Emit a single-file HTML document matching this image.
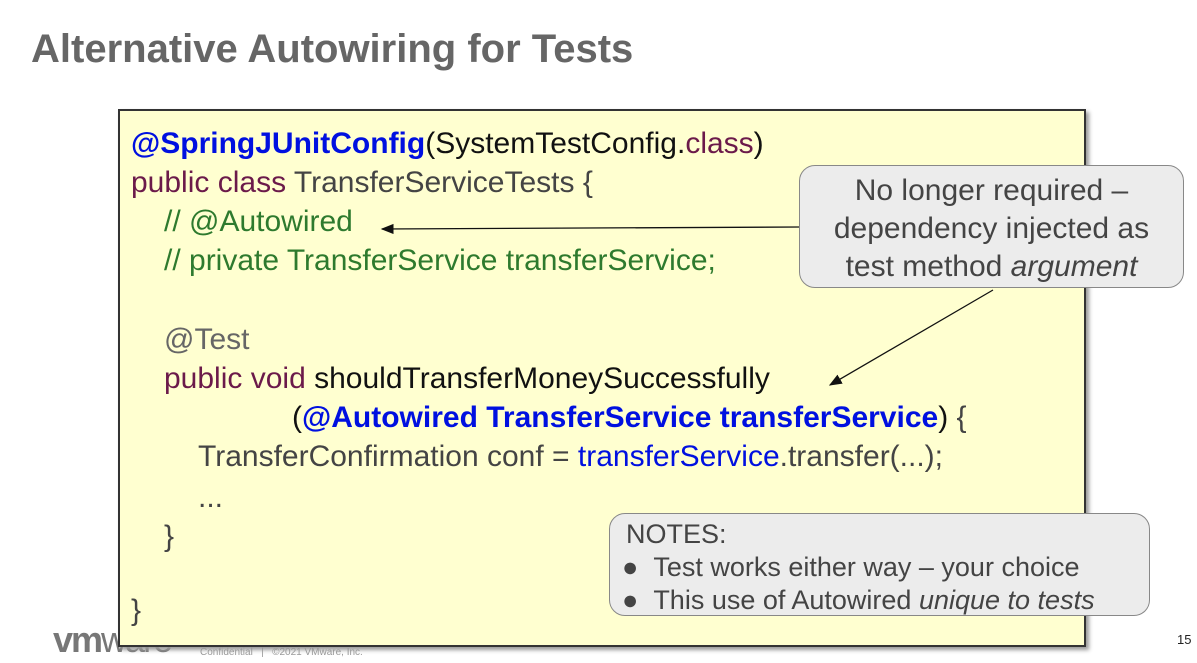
<!DOCTYPE html>
<html><head><meta charset="utf-8"><style>
body{margin:0;width:1197px;height:663px;background:#fff;position:relative;overflow:hidden;font-family:"Liberation Sans",sans-serif}
.t{position:absolute;left:31px;top:27px;font-size:40px;font-weight:bold;color:#666}
.box{position:absolute;left:118px;top:109px;width:964px;height:534px;background:#ffffd0;border:2px solid #333;box-shadow:3px 3px 4px #999}
.l{position:absolute;font-size:30px;line-height:40px;white-space:nowrap;color:#444}
.p{color:#6b1a4a}.g{color:#2e7a2e}.b{color:#0010e0;font-weight:bold}.bl{color:#0010e0}.k{color:#111}
.c{position:absolute;background:#ececec;border:1.5px solid #888;border-radius:16px;color:#444}
</style></head><body>
<div class="t">Alternative Autowiring for Tests</div>
<div style="position:absolute;left:53px;top:622px;font-size:36px;font-weight:bold;color:#777;letter-spacing:-2px;line-height:36px">vm<span style="font-weight:normal">ware</span></div>
<div class="box"></div>
<div class="l" style="left:131px;top:124px"><span class="b">@SpringJUnitConfig</span><span class="k">(SystemTestConfig.</span><span class="p">class</span><span class="k">)</span></div>
<div class="l" style="left:131px;top:163px"><span class="p">public class</span> TransferServiceTests {</div>
<div class="l g" style="left:164px;top:202px">// @Autowired</div>
<div class="l g" style="left:164px;top:241px">// private TransferService transferService;</div>
<div class="l" style="left:164px;top:320px;color:#666">@Test</div>
<div class="l" style="left:164px;top:359px"><span class="p">public void</span> <span class="k">shouldTransferMoneySuccessfully</span></div>
<div class="l" style="left:292px;top:398px"><span class="k">(</span><span class="b">@Autowired TransferService transferService</span><span class="k">)</span> {</div>
<div class="l" style="left:198px;top:437px">TransferConfirmation conf = <span class="bl">transferService</span>.transfer(...);</div>
<div class="l" style="left:198px;top:478px">...</div>
<div class="l" style="left:164px;top:517px">}</div>
<div class="l" style="left:131px;top:591px">}</div>
<svg style="position:absolute;left:0;top:0" width="1197" height="663">
<defs><marker id="a" markerWidth="10" markerHeight="8" refX="9" refY="4" orient="auto"><path d="M0,0 L10,4 L0,8z" fill="#111"/></marker></defs>
<line x1="800" y1="227" x2="382" y2="229" stroke="#111" stroke-width="1.3" marker-end="url(#a)"/>
<line x1="993" y1="290" x2="830" y2="385" stroke="#111" stroke-width="1.3" marker-end="url(#a)"/>
</svg>
<div class="c" style="left:799px;top:165px;width:385px;height:123px;text-align:center;font-size:30px;line-height:38px;padding-top:6px;box-sizing:border-box">No longer required –<br>dependency injected as<br>test method <i>argument</i></div>
<div class="c" style="left:609px;top:513px;width:541px;height:103px;font-size:27px;line-height:33px;box-sizing:border-box;padding:4px 0 0 16px">NOTES:<br><span style="margin-left:-4px">●</span>&nbsp;&nbsp;Test works either way – your choice<br><span style="margin-left:-4px">●</span>&nbsp;&nbsp;This use of Autowired <i>unique to tests</i></div>
<div style="position:absolute;left:200px;top:647px;font-size:10px;color:#999">Confidential &nbsp; | &nbsp; ©2021 VMware, Inc.</div>
<div style="position:absolute;left:1177px;top:632px;font-size:13px;color:#222">15</div>
</body></html>
